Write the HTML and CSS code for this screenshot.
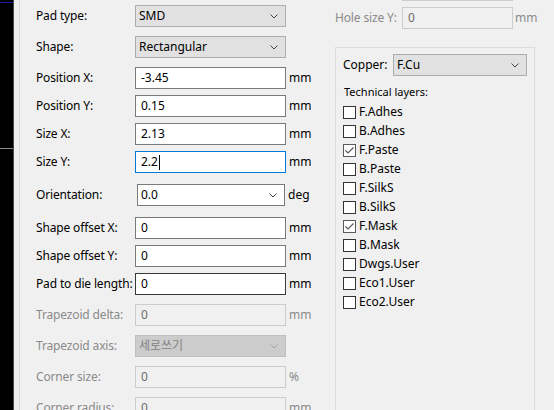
FILE: index.html
```html
<!DOCTYPE html>
<html>
<head>
<meta charset="utf-8">
<link rel="stylesheet" href="styles.css">
</head>
<body>
<div class="app">
  <div class="strip"><div class="strip-blue"></div><div class="strip-gray"></div></div>
  <div class="sep"></div>
  <div class="form">
    <div class="row r1"><span class="label">Pad type:</span><div class="ctl select">SMD<svg class="chev" width="8" height="5" viewBox="0 0 8 5"><polyline points="0.5,0.5 4,4 7.5,0.5" fill="none" stroke="#444" stroke-width="1"/></svg></div></div>
    <div class="row r9"><span class="label">Shape:</span><div class="ctl select">Rectangular<svg class="chev" width="8" height="5" viewBox="0 0 8 5"><polyline points="0.5,0.5 4,4 7.5,0.5" fill="none" stroke="#444" stroke-width="1"/></svg></div></div>
    <div class="row r9"><span class="label">Position X:</span><div class="ctl input">-3.45</div><span class="unit">mm</span></div>
    <div class="row r6"><span class="label">Position Y:</span><div class="ctl input">0.15</div><span class="unit">mm</span></div>
    <div class="row r6"><span class="label">Size X:</span><div class="ctl input">2.13</div><span class="unit">mm</span></div>
    <div class="row r6"><span class="label">Size Y:</span><div class="ctl input focus">2.2<span class="caret"></span></div><span class="unit">mm</span></div>
    <div class="row r11"><span class="label">Orientation:</span><div class="ctl combo">0.0<svg class="chev" width="8" height="5" viewBox="0 0 8 5"><polyline points="0.5,0.5 4,4 7.5,0.5" fill="none" stroke="#444" stroke-width="1"/></svg></div><span class="unit">deg</span></div>
    <div class="row r11"><span class="label">Shape offset X:</span><div class="ctl input">0</div><span class="unit">mm</span></div>
    <div class="row r6"><span class="label">Shape offset Y:</span><div class="ctl input">0</div><span class="unit">mm</span></div>
    <div class="row r6"><span class="label">Pad to die length:</span><div class="ctl input hover">0</div><span class="unit">mm</span></div>
    <div class="row r9 disabled"><span class="label">Trapezoid delta:</span><div class="ctl input">0</div><span class="unit">mm</span></div>
    <div class="row r9 disabled"><span class="label">Trapezoid axis:</span><div class="ctl select">세로쓰기<svg class="chev" width="8" height="5" viewBox="0 0 8 5"><polyline points="0.5,0.5 4,4 7.5,0.5" fill="none" stroke="#a6a6a6" stroke-width="1"/></svg></div></div>
    <div class="row r9 disabled"><span class="label">Corner size:</span><div class="ctl input">0</div><span class="unit">%</span></div>
    <div class="row r9 disabled"><span class="label">Corner radius:</span><div class="ctl input">0</div><span class="unit">mm</span></div>
  </div>
  <div class="side">
    <div class="stub"></div>
    <div class="hole-row disabled"><span class="hole-label">Hole size Y:</span><div class="ctl input hole-input">0</div><span class="unit hole-unit">mm</span></div>
    <div class="group">
      <div class="copper-row"><span class="copper-label">Copper:</span><div class="ctl select copper-select">F.Cu<svg class="chev" width="8" height="5" viewBox="0 0 8 5"><polyline points="0.5,0.5 4,4 7.5,0.5" fill="none" stroke="#444" stroke-width="1"/></svg></div></div>
      <div class="tech-label">Technical layers:</div>
      <div class="checks">
        <div class="check"><span class="box"></span><span>F.Adhes</span></div>
        <div class="check"><span class="box"></span><span>B.Adhes</span></div>
        <div class="check"><span class="box checked"><svg width="11" height="11" viewBox="0 0 11 11"><polyline points="1.5,5.5 4,8 9.5,2.5" fill="none" stroke="#5a5a5a" stroke-width="1.2"/></svg></span><span>F.Paste</span></div>
        <div class="check"><span class="box"></span><span>B.Paste</span></div>
        <div class="check"><span class="box"></span><span>F.SilkS</span></div>
        <div class="check"><span class="box"></span><span>B.SilkS</span></div>
        <div class="check"><span class="box checked"><svg width="11" height="11" viewBox="0 0 11 11"><polyline points="1.5,5.5 4,8 9.5,2.5" fill="none" stroke="#5a5a5a" stroke-width="1.2"/></svg></span><span>F.Mask</span></div>
        <div class="check"><span class="box"></span><span>B.Mask</span></div>
        <div class="check"><span class="box"></span><span>Dwgs.User</span></div>
        <div class="check"><span class="box"></span><span>Eco1.User</span></div>
        <div class="check"><span class="box"></span><span>Eco2.User</span></div>
      </div>
    </div>
  </div>
</div>
</body>
</html>
```

FILE: styles.css
```css
html, body {
  margin: 0;
  padding: 0;
  background: #f0f0f0;
  overflow: hidden;
}
body {
  font-family: "Noto Sans", "Noto Sans CJK KR", sans-serif;
  font-size: 12px;
  color: #000;
  width: 554px;
  height: 410px;
}
.app {
  display: flex;
  height: 410px;
  overflow: hidden;
}
.strip {
  width: 13px;
  flex: none;
  background: #000;
  border-right: 1px solid #4a4a4a;
  padding-top: 2px;
  box-sizing: content-box;
}
.strip-blue {
  height: 1px;
  background: #1a1aa8;
}
.strip-gray {
  height: 1px;
  margin-top: 145px;
  background: #8a8a8a;
}
.sep {
  width: 5px;
  flex: none;
  border-right: 1px solid #dcdcdc;
}
.form {
  width: 299px;
  flex: none;
  padding-left: 16px;
  padding-top: 5px;
}
.row {
  display: flex;
  align-items: center;
  height: 22px;
}
.r9 { margin-top: 9px; }
.r6 { margin-top: 6px; }
.r11 { margin-top: 11px; }
.label {
  width: 99px;
  flex: none;
  white-space: nowrap;
  line-height: 16px;
  letter-spacing: -0.15px;
}
.ctl {
  box-sizing: border-box;
  width: 151px;
  height: 22px;
  flex: none;
  display: flex;
  align-items: center;
  line-height: 16px;
  white-space: nowrap;
  position: relative;
}
.select {
  background: #e1e1e1;
  border: 1px solid #adadad;
  padding-left: 3px;
}
.input {
  background: #fff;
  border: 1px solid #7a7a7a;
  padding-left: 5px;
}
.input.focus {
  border-color: #0078d7;
}
.input.hover {
  border-color: #3a3a3a;
}
.combo {
  background: #fff;
  border: 1px solid #7a7a7a;
  margin-left: 2px;
  width: 148px;
  padding-left: 3px;
}
.caret {
  display: inline-block;
  width: 1px;
  height: 15px;
  background: #000;
  margin-left: 1px;
}
.chev {
  position: absolute;
  right: 7px;
  top: 8px;
}
.unit {
  margin-left: 3px;
  line-height: 16px;
  white-space: nowrap;
}
.disabled .label,
.disabled .unit,
.disabled .hole-label {
  color: #8a8a8a;
}
.disabled .input {
  background: #f0f0f0;
  border-color: #cccccc;
  color: #6d6d6d;
}
.disabled .select {
  background: #cccccc;
  border-color: #bfbfbf;
  color: #838383;
}
.side {
  width: 220px;
  flex: none;
}
.stub {
  box-sizing: border-box;
  margin-left: 67px;
  width: 111px;
  height: 1px;
  border: 1px solid #cccccc;
  border-top: none;
}
.hole-row {
  display: flex;
  align-items: center;
  height: 22px;
  margin-top: 6px;
}
.hole-label {
  width: 67px;
  flex: none;
  white-space: nowrap;
  line-height: 16px;
  letter-spacing: -0.15px;
}
.hole-input {
  width: 111px;
}
.hole-unit {
  margin-left: 2px;
}
.group {
  box-sizing: border-box;
  margin-top: 18px;
  width: 200px;
  height: 380px;
  border: 1px solid #dcdcdc;
  padding: 6px 0 0 7px;
}
.copper-row {
  display: flex;
  align-items: center;
  height: 22px;
}
.copper-label {
  width: 50px;
  flex: none;
  line-height: 16px;
}
.copper-select {
  width: 134px;
}
.tech-label {
  font-size: 11px;
  line-height: 14px;
  margin-top: 9px;
  margin-left: 1px;
}
.checks {
  margin-top: 7px;
}
.check {
  display: flex;
  align-items: flex-start;
  height: 19px;
}
.check span:last-child {
  line-height: 14px;
  margin-left: 3px;
  margin-top: -1px;
}
.box {
  box-sizing: border-box;
  width: 13px;
  height: 13px;
  flex: none;
  border: 1px solid #333;
  background: #fff;
  display: flex;
}
.box.checked {
  border-color: #5a5a5a;
}
```
